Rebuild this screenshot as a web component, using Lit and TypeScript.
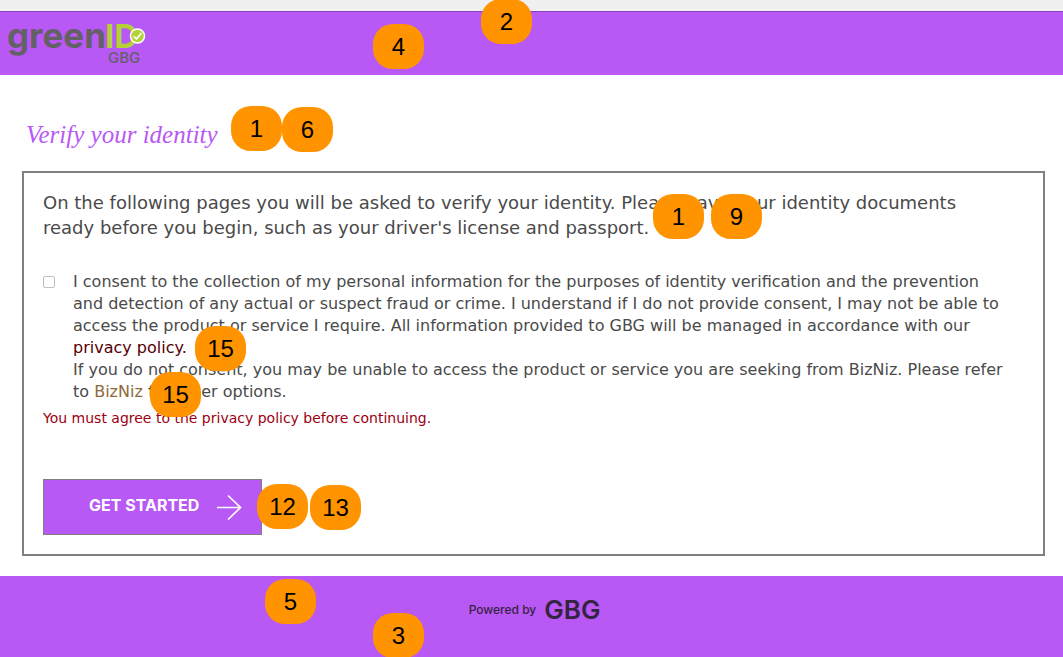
import { LitElement, html, css, svg } from "lit";
import { customElement } from "lit/decorators.js";
import { styleMap } from "lit/directives/style-map.js";

interface Marker {
  label: string;
  x: number;
  y: number;
}

const MARKERS: Marker[] = [
  { label: "2", x: 481, y: -1 },
  { label: "4", x: 373, y: 24 },
  { label: "1", x: 231, y: 106 },
  { label: "6", x: 282, y: 107 },
  { label: "1", x: 653, y: 194 },
  { label: "9", x: 711, y: 194 },
  { label: "15", x: 195, y: 326 },
  { label: "15", x: 150, y: 372 },
  { label: "12", x: 257, y: 484 },
  { label: "13", x: 310, y: 485 },
  { label: "5", x: 265, y: 579 },
  { label: "3", x: 373, y: 613 },
];

// Numbered callouts pinned over the page.
@customElement("style-markers")
export class StyleMarkers extends LitElement {
  static styles = css`
    :host {
      display: block;
      position: absolute;
      inset: 0;
      overflow: hidden;
      pointer-events: none;
    }
    .marker {
      position: absolute;
      display: flex;
      align-items: center;
      justify-content: center;
      width: 51px;
      height: 45px;
      border-radius: 20px;
      background: #ff9300;
      color: #000;
      font: 24px/28px "Liberation Sans", Arial, sans-serif;
    }
  `;

  render() {
    return MARKERS.map(
      (m) => html`<span class="marker" style=${styleMap({ left: `${m.x}px`, top: `${m.y}px` })}>${m.label}</span>`
    );
  }
}

const logo = svg`
  <text class="logo-green" x="-1" y="28">green</text>
  <text class="logo-id" x="97" y="28">ID</text>
  <text class="logo-gbg" x="100" y="43">GBG</text>
  <circle cx="129.500" cy="16" r="7" fill="#b2d235" stroke="#fff" stroke-width="1.500" />
  <path d="M125.800 16.300 L128.500 19 L133.500 13" fill="none" stroke="#fff" stroke-width="1.700" />
`;

@customElement("app-root")
export class AppRoot extends LitElement {
  static styles = css`
    :host {
      display: flex;
      flex-direction: column;
      position: relative;
      min-height: 100vh;
      background: #fff;
      color: #4a4a4a;
      font-family: "DejaVu Sans", Verdana, sans-serif;
    }
    * {
      box-sizing: border-box;
    }
    .strip {
      height: 11px;
      background: #f0f0f0;
    }
    .header {
      padding: 8px;
      border-top: 1px solid #8a3fc0;
      background: #b858f5;
    }
    .logo {
      display: block;
      width: 142px;
      height: 47px;
      overflow: visible;
      font-family: Inter, sans-serif;
    }
    .logo-green {
      fill: #636066;
      font-size: 35px;
      font-weight: 700;
    }
    .logo-id {
      fill: #b2d235;
      font-size: 33px;
      font-weight: 700;
    }
    .logo-gbg {
      fill: #636066;
      font-size: 15px;
      font-weight: 500;
    }
    .main {
      flex: 1;
      padding: 36px 18px 20px 22px;
    }
    .title {
      margin: 0 0 12px;
      padding-left: 4px;
      color: #b858f5;
      font: italic 400 25px/48px "Liberation Serif", serif;
    }
    .panel {
      padding: 17px 19px 19px;
      border: 2px solid #808080;
    }
    .intro {
      margin: 0 0 31px;
      padding-right: 16px;
      font-size: 18px;
      line-height: 25px;
    }
    .consent {
      display: flex;
      align-items: flex-start;
      gap: 18px;
      padding-right: 16px;
      font-size: 16px;
      line-height: 22px;
    }
    .check {
      appearance: none;
      flex: none;
      width: 12px;
      height: 12px;
      margin: 5px 0 0;
      border: 1px solid #c0c0c0;
      border-radius: 2px;
      background: #fff;
    }
    .policy,
    .biz {
      color: #560005;
      text-decoration: none;
    }
    .biz {
      color: #8c6a3c;
    }
    .error {
      margin: 5px 0 51px;
      color: #9c0010;
      font-size: 14px;
      line-height: 20px;
    }
    .start {
      display: flex;
      align-items: center;
      gap: 17px;
      height: 56px;
      padding: 0 19px 0 45px;
      border: 1px solid #808080;
      border-radius: 0;
      background: #b858f5;
      color: #fff;
      font: 700 16px/20px Inter, sans-serif;
    }
    .start-text {
      padding-bottom: 4px;
    }
    .arrow {
      width: 26px;
      height: 26px;
    }
    .footer {
      display: flex;
      align-items: flex-start;
      justify-content: center;
      gap: 8px;
      height: 81px;
      padding: 20px 0 0 6px;
      background: #b858f5;
      color: #34243f;
      font: 500 12px/27px Inter, sans-serif;
    }
    .brand {
      font-size: 26px;
      font-weight: 600;
    }
  `;

  render() {
    return html`
      <div class="strip"></div>
      <header class="header">
        <svg class="logo" viewBox="0 0 142 47" role="img" aria-label="greenID GBG">${logo}</svg>
      </header>
      <main class="main">
        <h1 class="title">Verify your identity</h1>
        <section class="panel">
          <p class="intro">
            On the following pages you will be asked to verify your identity. Please have your identity documents ready
            before you begin, such as your driver's license and passport.
          </p>
          <div class="consent">
            <input class="check" type="checkbox" id="consent" />
            <label for="consent">
              I consent to the collection of my personal information for the purposes of identity verification and the
              prevention and detection of any actual or suspect fraud or crime. I understand if I do not provide
              consent, I may not be able to access the product or service I require. All information provided to GBG
              will be managed in accordance with our <a class="policy" href="#privacy">privacy policy.</a><br />
              If you do not consent, you may be unable to access the product or service you are seeking from BizNiz.
              Please refer to <a class="biz" href="#bizniz">BizNiz</a> for other options.
            </label>
          </div>
          <p class="error">You must agree to the privacy policy before continuing.</p>
          <button class="start" type="button">
            <span class="start-text">GET STARTED</span>
            <svg class="arrow" viewBox="0 0 26 26" fill="none" stroke="#fff" stroke-width="1.700">
              <path d="M1 13.500 H24.500 M12 1.500 L24.500 13.500 L12 25.500" />
            </svg>
          </button>
        </section>
      </main>
      <footer class="footer">
        <span>Powered by</span>
        <span class="brand">GBG</span>
      </footer>
      <style-markers></style-markers>
    `;
  }
}
